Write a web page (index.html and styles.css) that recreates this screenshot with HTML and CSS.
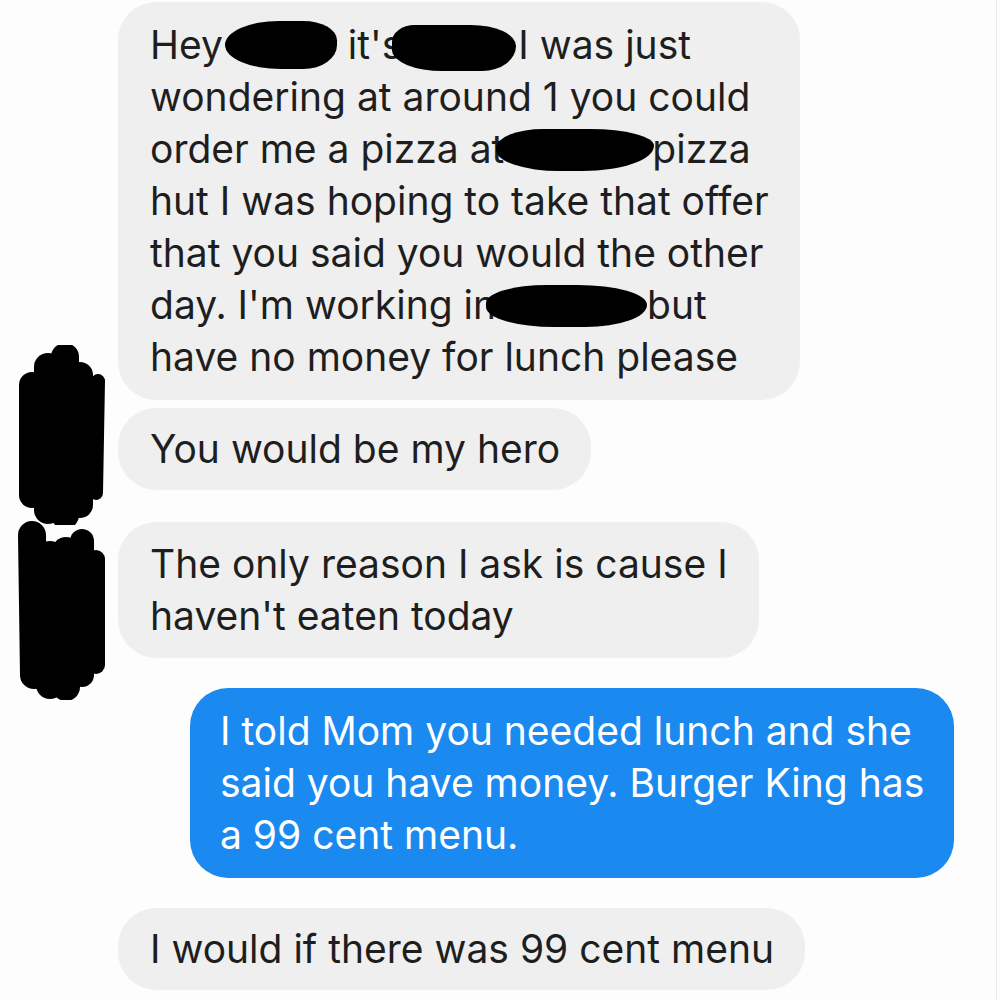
FILE: index.html
```html
<!DOCTYPE html>
<html>
<head>
<meta charset="utf-8">
<link rel="stylesheet" href="styles.css">
</head>
<body>
<div class="page">
  <div class="thread">
    <div class="bubble in first">Hey<span class="redact r1"></span> it's<span class="redact r2"></span>I was just<br>wondering at around 1 you could<br>order me a pizza at<span class="redact r3"></span>pizza<br>hut I was hoping to take that offer<br>that you said you would the other<br>day. I'm working in<span class="redact r4"></span>but<br>have no money for lunch please</div>
    <div class="bubble in second">You would be my hero</div>
    <div class="bubble in third">The only reason I ask is cause I<br>haven't eaten today</div>
    <div class="bubble out">I told Mom you needed lunch and she<br>said you have money. Burger King has<br>a 99 cent menu.</div>
    <div class="bubble in last">I would if there was 99 cent menu</div>
  </div>
  <svg class="avatar a1" viewBox="0 0 100 180" aria-hidden="true">
    <g stroke="#000" stroke-linecap="round" fill="none">
      <line x1="22" y1="40" x2="22" y2="150" stroke-width="26"/>
      <line x1="38" y1="22" x2="38" y2="165" stroke-width="28"/>
      <line x1="55" y1="12" x2="55" y2="170" stroke-width="28"/>
      <line x1="70" y1="30" x2="70" y2="160" stroke-width="26"/>
      <line x1="88" y1="36" x2="86" y2="148" stroke-width="14"/>
    </g>
  </svg>
  <svg class="avatar a2" viewBox="0 0 100 185" aria-hidden="true">
    <g stroke="#000" stroke-linecap="round" fill="none">
      <line x1="22" y1="20" x2="24" y2="160" stroke-width="28"/>
      <line x1="40" y1="40" x2="40" y2="170" stroke-width="28"/>
      <line x1="56" y1="36" x2="56" y2="172" stroke-width="28"/>
      <line x1="72" y1="26" x2="72" y2="160" stroke-width="24"/>
      <line x1="86" y1="44" x2="86" y2="150" stroke-width="18"/>
    </g>
  </svg>
</div>
</body>
</html>
```
FILE: styles.css
```css
html, body {
  margin: 0;
  padding: 0;
  background: #fdfdfd;
}

.page {
  position: relative;
  width: 996px;
  height: 1000px;
  overflow: hidden;
  border-right: 1px solid #ebebeb;
}

.thread {
  display: flex;
  flex-direction: column;
  align-items: flex-start;
  padding: 2px 0 0 118px;
  font-family: Inter, "Liberation Sans", Arial, sans-serif;
  font-size: 39px;
  line-height: 52px;
  color: #1e1e1e;
}

.bubble {
  border-radius: 38px;
  white-space: nowrap;
}

.in {
  background: #efefef;
  padding: 17px 31px 17px 32px;
}

.first {
  margin-bottom: 8px;
}

.second {
  padding-top: 15px;
  padding-bottom: 15px;
  margin-bottom: 32px;
}

.third {
  padding-top: 16px;
  padding-bottom: 16px;
  margin-bottom: 30px;
}

.out {
  margin-left: 72px;
  background: #1b8af0;
  color: #fff;
  padding: 17px 30px 17px 30px;
  margin-bottom: 30px;
}

.last {
  padding-top: 15px;
  padding-bottom: 15px;
}

.redact {
  display: inline-block;
  vertical-align: -8px;
  height: 42px;
  margin-top: -8px;
  margin-bottom: 0;
  background: #000;
}

.r1 {
  width: 112px;
  height: 48px;
  margin-bottom: -2px;
  margin-left: 2px;
  border-radius: 48% 30% 30% 50% / 50% 40% 50% 50%;
}

.r2 {
  width: 124px;
  height: 46px;
  margin-bottom: -4px;
  margin-left: -10px;
  margin-right: 2px;
  border-radius: 20% 40% 30% 45% / 40% 50% 60% 50%;
}

.r3 {
  width: 158px;
  margin-left: -8px;
  margin-right: -2px;
  border-radius: 30% 40% 45% 40% / 45% 40% 60% 50%;
}

.r4 {
  width: 161px;
  margin-left: -10px;
  border-radius: 40% 45% 40% 45% / 45% 50% 55% 50%;
}

.avatar {
  position: absolute;
  left: 10px;
  width: 100px;
}

.a1 {
  top: 345px;
  height: 180px;
}

.a2 {
  top: 515px;
  height: 185px;
}
```
